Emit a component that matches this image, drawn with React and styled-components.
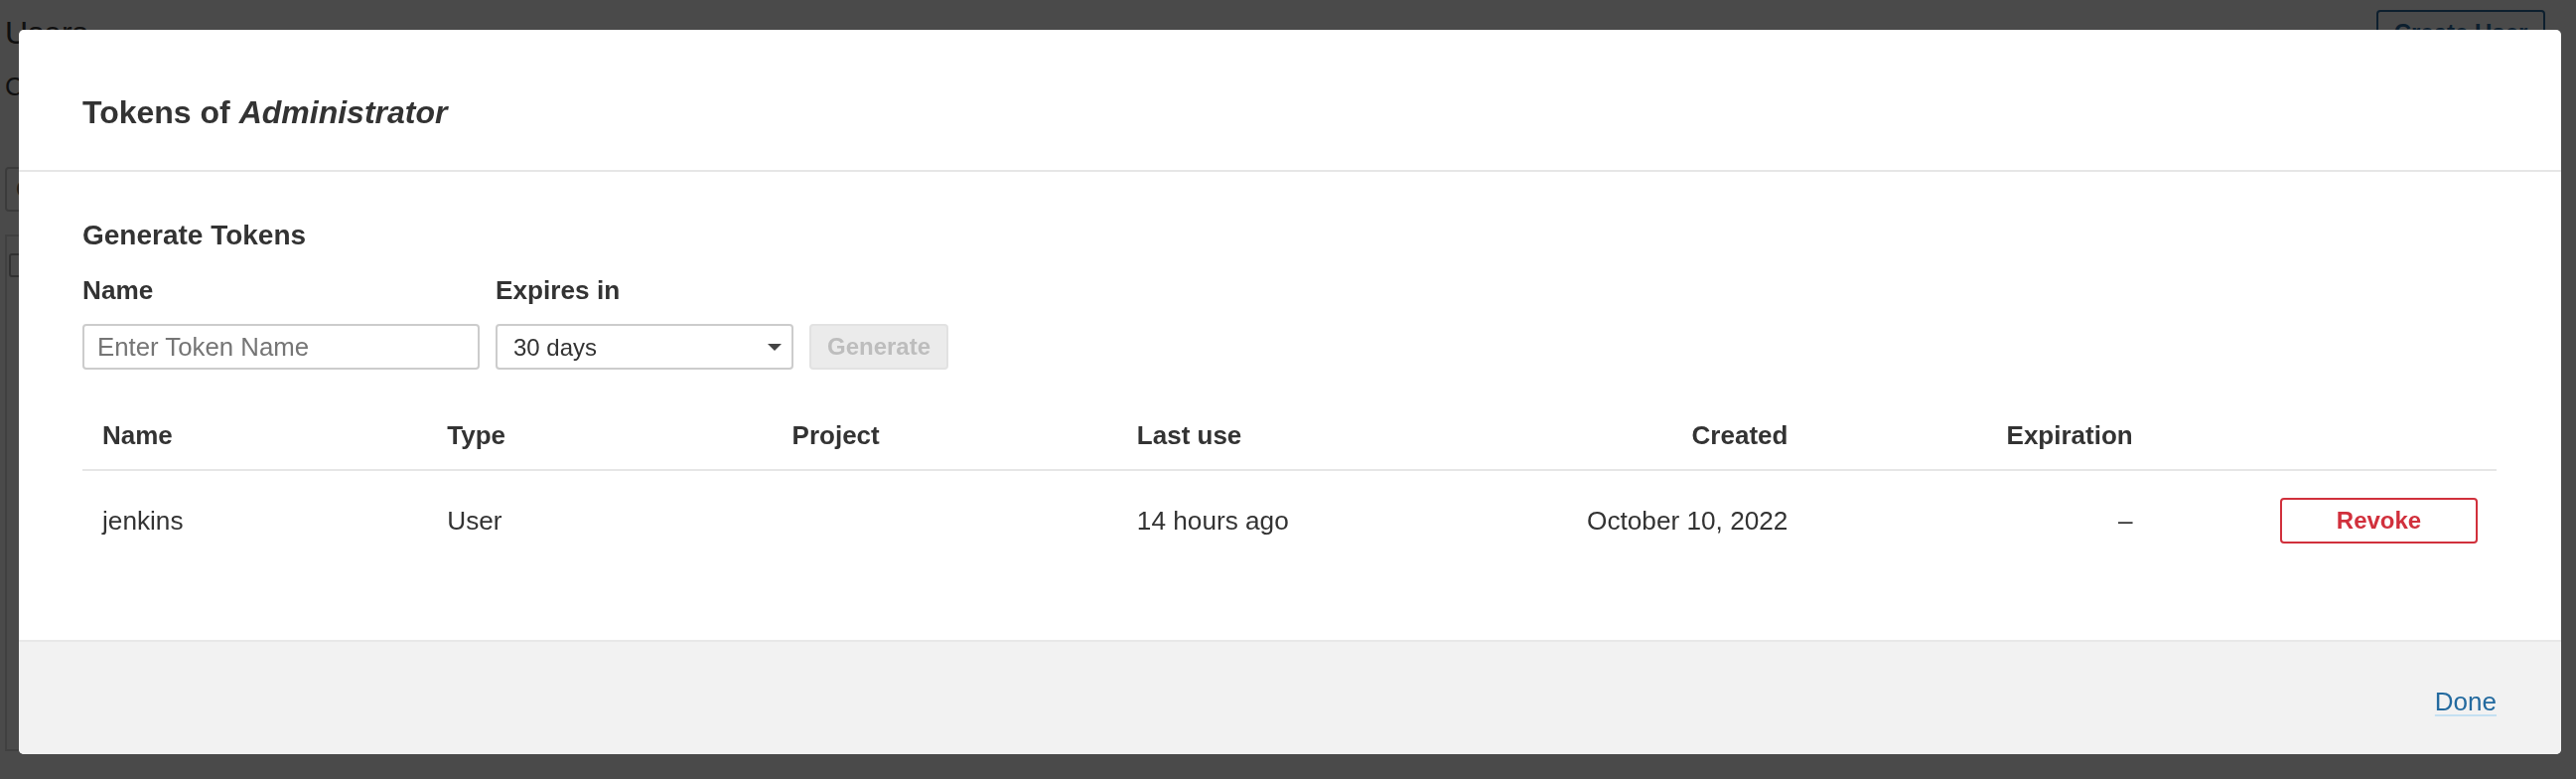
import React from "react";
import styled, { createGlobalStyle } from "styled-components";

const FONT = "'Liberation Sans', Arial, Helvetica, sans-serif";

const GlobalStyle = createGlobalStyle`
  html, body {
    margin: 0;
    padding: 0;
  }
  body {
    font-family: ${FONT};
    background: #ffffff;
    color: #333333;
    overflow: hidden;
    width: 2594px;
    height: 784px;
  }
  * { box-sizing: border-box; }
`;

/* ---------- background page (behind the overlay) ---------- */
const Page = styled.div`
  padding: 10px 31px 0 5px;
  height: 784px;
  overflow: hidden;
`;

const PageHeader = styled.header`
  display: flex;
  justify-content: space-between;
  align-items: flex-start;
`;

const PageTitle = styled.h1`
  margin: 5px 0 0;
  font-size: 32px;
  font-weight: normal;
  line-height: normal;
  color: #3a3a3a;
`;

const CreateButton = styled.button`
  width: 170px;
  height: 46px;
  border: 2px solid #2f6c9e;
  border-radius: 4px;
  background: #ffffff;
  color: #2f6c9e;
  font-family: ${FONT};
  font-size: 24px;
  font-weight: bold;
`;

const Intro = styled.p`
  margin: 17px 0 0;
  font-size: 25.6px;
  line-height: normal;
  color: #3a3a3a;
`;

const SearchInput = styled.input`
  display: block;
  margin-top: 66px;
  width: 420px;
  height: 45px;
  border: 2px solid #cccccc;
  border-radius: 4px;
  padding: 0 9px;
  font-family: ${FONT};
  font-size: 25.6px;
  color: #333;
  &::placeholder { color: #555; }
`;

const ListTable = styled.div`
  margin-top: 23px;
  height: 520px;
  border: 2px solid #dddddd;
  padding: 17px 0 0 2px;
`;

const ListCheck = styled.span`
  display: block;
  width: 24px;
  height: 24px;
  border: 2px solid #aaaaaa;
  border-radius: 3px;
`;

/* ---------- modal ---------- */
const Backdrop = styled.div`
  position: fixed;
  inset: 0;
  background: rgba(0, 0, 0, 0.71);
`;

const Dialog = styled.section`
  margin: 30px 0 0 19px;
  width: 2560px;
  background: #ffffff;
  border-radius: 5px;
  overflow: hidden;
`;

const DialogHeader = styled.div`
  padding: 65px 64px 39px;
  border-bottom: 2px solid #e6e6e6;
`;

const DialogTitle = styled.h2`
  margin: 0;
  font-size: 32px;
  font-weight: bold;
  line-height: normal;
  color: #333333;
  em { font-style: italic; }
`;

const DialogBody = styled.div`
  padding: 48px 65px 70px 64px;
`;

const SectionTitle = styled.h3`
  margin: 0 0 24px;
  font-size: 28px;
  font-weight: bold;
  line-height: normal;
  color: #333333;
`;

const GenerateForm = styled.form`
  display: flex;
  align-items: flex-end;
  gap: 16px;
`;

const Field = styled.div`
  display: flex;
  flex-direction: column;
  gap: 18px;
  width: ${(p) => p.$width}px;
`;

const FieldLabel = styled.label`
  font-size: 26.2px;
  font-weight: bold;
  line-height: normal;
  color: #333333;
`;

const TextInput = styled.input`
  display: block;
  height: 46px;
  width: 100%;
  border: 2px solid #cccccc;
  border-radius: 4px;
  padding: 0 13px;
  font-family: ${FONT};
  font-size: 25.8px;
  color: #333;
  background: #fff;
  outline: none;
  &::placeholder { color: #757575; }
`;

const SelectWrap = styled.div`
  position: relative;
  &::after {
    content: "";
    position: absolute;
    right: 12px;
    top: 50%;
    margin-top: -3px;
    border-left: 7px solid transparent;
    border-right: 7px solid transparent;
    border-top: 7px solid #444444;
    pointer-events: none;
  }
`;

const Select = styled.select`
  display: block;
  appearance: none;
  -webkit-appearance: none;
  width: 100%;
  height: 46px;
  border: 2px solid #cccccc;
  border-radius: 4px;
  padding: 0 40px 0 16px;
  font-family: ${FONT};
  font-size: 24px;
  color: #333333;
  background: #ffffff;
  outline: none;
`;

const GenerateButton = styled.button`
  height: 46px;
  padding: 0 16px;
  border: 2px solid #e2e2e2;
  border-radius: 4px;
  background: #ebebeb;
  color: #bdbdbd;
  font-family: ${FONT};
  font-size: 24px;
  font-weight: bold;
`;

const TokensTable = styled.table`
  width: 100%;
  margin-top: 32px;
  table-layout: fixed;
  border-collapse: collapse;
`;

const HeadCell = styled.th`
  padding: 19px 19px 18.4px 20px;
  text-align: ${(p) => p.$align || "left"};
  font-size: 26px;
  font-weight: bold;
  line-height: normal;
  color: #333333;
  border-bottom: 2px solid #e6e6e6;
`;

const Cell = styled.td`
  padding: 27px 19px 27px 20px;
  text-align: ${(p) => p.$align || "left"};
  vertical-align: middle;
  font-size: 26.2px;
  line-height: normal;
  color: #333333;
`;

const RevokeButton = styled.button`
  width: 199px;
  height: 46px;
  border: 2px solid #d1303c;
  border-radius: 4px;
  background: #ffffff;
  color: #d1303c;
  font-family: ${FONT};
  font-size: 24px;
  font-weight: bold;
  vertical-align: middle;
`;

const DialogFooter = styled.footer`
  display: flex;
  justify-content: flex-end;
  padding: 45px 65px 37px;
  background: #f2f2f2;
  border-top: 2px solid #e8e8e8;
`;

const DoneLink = styled.a`
  font-size: 26px;
  line-height: normal;
  color: #236a9f;
  text-decoration: underline;
  text-decoration-color: #c4e0f2;
  text-decoration-thickness: 2px;
  text-underline-offset: 4px;
  cursor: pointer;
`;

const columns = [
  { key: "name", label: "Name" },
  { key: "type", label: "Type" },
  { key: "project", label: "Project" },
  { key: "lastUse", label: "Last use" },
  { key: "created", label: "Created", align: "right" },
  { key: "expiration", label: "Expiration", align: "right" },
  { key: "actions", label: "", align: "right" },
];

const tokens = [
  {
    name: "jenkins",
    type: "User",
    project: "",
    lastUse: "14 hours ago",
    created: "October 10, 2022",
    expiration: "–",
  },
];

export default function App() {
  return (
    <>
      <GlobalStyle />
      <Page>
        <PageHeader>
          <PageTitle>Users</PageTitle>
          <CreateButton type="button">Create User</CreateButton>
        </PageHeader>
        <Intro>Create</Intro>
        <SearchInput placeholder="Quick search" />
        <ListTable>
          <ListCheck />
        </ListTable>
      </Page>

      <Backdrop>
        <Dialog role="dialog" aria-modal="true">
          <DialogHeader>
            <DialogTitle>
              Tokens of <em>Administrator</em>
            </DialogTitle>
          </DialogHeader>

          <DialogBody>
            <SectionTitle>Generate Tokens</SectionTitle>
            <GenerateForm onSubmit={(e) => e.preventDefault()}>
              <Field $width={400}>
                <FieldLabel htmlFor="token-name">Name</FieldLabel>
                <TextInput id="token-name" placeholder="Enter Token Name" />
              </Field>
              <Field $width={300}>
                <FieldLabel htmlFor="token-expiry">Expires in</FieldLabel>
                <SelectWrap>
                  <Select id="token-expiry" defaultValue="30">
                    <option value="7">7 days</option>
                    <option value="30">30 days</option>
                    <option value="90">90 days</option>
                    <option value="365">1 year</option>
                    <option value="0">No expiration</option>
                  </Select>
                </SelectWrap>
              </Field>
              <GenerateButton type="submit" disabled>
                Generate
              </GenerateButton>
            </GenerateForm>

            <TokensTable>
              <thead>
                <tr>
                  {columns.map((c) => (
                    <HeadCell key={c.key} $align={c.align}>
                      {c.label}
                    </HeadCell>
                  ))}
                </tr>
              </thead>
              <tbody>
                {tokens.map((t) => (
                  <tr key={t.name}>
                    <Cell>{t.name}</Cell>
                    <Cell>{t.type}</Cell>
                    <Cell>{t.project}</Cell>
                    <Cell>{t.lastUse}</Cell>
                    <Cell $align="right">{t.created}</Cell>
                    <Cell $align="right">{t.expiration}</Cell>
                    <Cell $align="right">
                      <RevokeButton type="button">Revoke</RevokeButton>
                    </Cell>
                  </tr>
                ))}
              </tbody>
            </TokensTable>
          </DialogBody>

          <DialogFooter>
            <DoneLink>Done</DoneLink>
          </DialogFooter>
        </Dialog>
      </Backdrop>
    </>
  );
}
